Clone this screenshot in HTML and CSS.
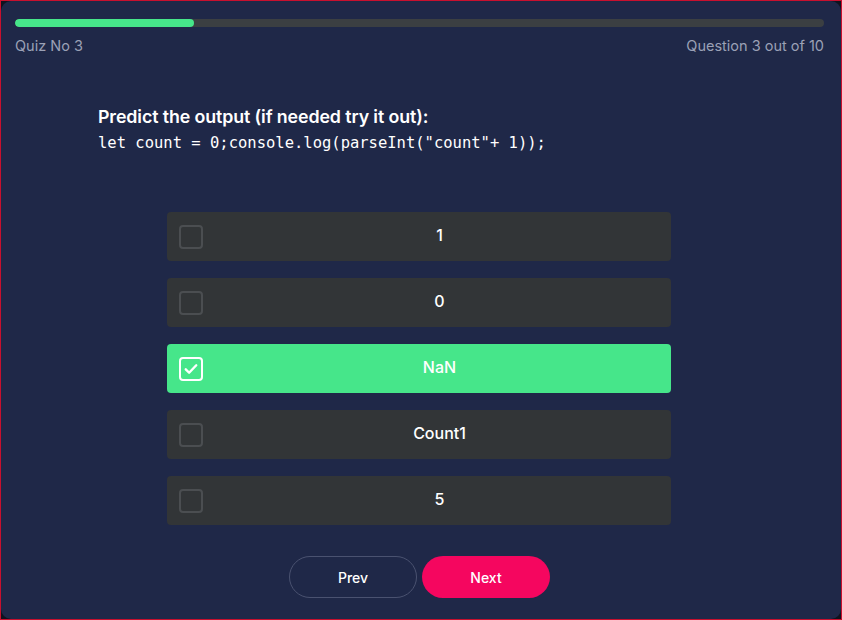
FILE: index.html
```html
<!DOCTYPE html>
<html>
<head>
<meta charset="utf-8">
<link rel="stylesheet" href="styles.css">
</head>
<body>
<div class="frame">
  <div class="panel">
    <div class="progress"><div class="progress-fill" style="width:22.1%"></div></div>
    <div class="meta">
      <span>Quiz No 3</span>
      <span>Question 3 out of 10</span>
    </div>
    <div class="question">
      <h2 class="q-title">Predict the output (if needed try it out):</h2>
      <code class="q-code">let count = 0;console.log(parseInt("count"+ 1));</code>
    </div>
    <div class="options">
      <div class="option"><span class="box"></span><span class="label">1</span></div>
      <div class="option"><span class="box"></span><span class="label">0</span></div>
      <div class="option selected"><span class="box"><svg viewBox="0 0 24 24" width="18" height="18"><path d="M5 12.5l4.5 4.5L19 7" fill="none" stroke="#fff" stroke-width="3.2" stroke-linecap="round" stroke-linejoin="round"/></svg></span><span class="label">NaN</span></div>
      <div class="option"><span class="box"></span><span class="label">Count1</span></div>
      <div class="option"><span class="box"></span><span class="label">5</span></div>
    </div>
    <div class="nav">
      <button class="btn btn-prev">Prev</button>
      <button class="btn btn-next">Next</button>
    </div>
  </div>
</div>
</body>
</html>
```
FILE: styles.css
```css
* { box-sizing: border-box; }
html, body { margin: 0; padding: 0; }
body {
  width: 842px;
  height: 620px;
  background: #0d0f1c;
  font-family: Inter, "Noto Sans", sans-serif;
}
.frame {
  width: 842px;
  height: 620px;
  border: 1px solid #c8102e;
  background: #10131f;
}
.panel {
  height: 100%;
  background: #1f2848;
  border-radius: 10px;
  padding: 18px 17px 0 14px;
  display: flex;
  flex-direction: column;
}
.progress {
  height: 8px;
  background: #3b3f42;
  border-radius: 4px;
  overflow: hidden;
}
.progress-fill {
  height: 100%;
  background: #46e68a;
  border-radius: 4px;
}
.meta {
  display: flex;
  justify-content: space-between;
  margin-top: 10px;
  font-size: 14.5px;
  color: #9ba1b6;
  letter-spacing: 0;
}
.question {
  margin: 52px 0 0 83px;
}
.q-title {
  margin: 0;
  font-size: 17.8px;
  font-weight: 600;
  color: #ffffff;
  letter-spacing: -0.1px;
}
.q-code {
  display: block;
  margin-top: 7px;
  font-family: "DejaVu Sans Mono", "Liberation Mono", monospace;
  font-size: 15.5px;
  color: #ffffff;
}
.options {
  margin: 60px auto 0;
  width: 504px;
  display: flex;
  flex-direction: column;
  gap: 17px;
  position: relative;
  left: -1px;
}
.option {
  height: 49px;
  background: #323537;
  border-radius: 4px;
  display: flex;
  align-items: center;
  padding-left: 12px;
}
.option.selected { background: #46e68a; }
.box {
  width: 24px;
  height: 24px;
  border: 2px solid #4b4e51;
  border-radius: 4px;
  display: flex;
  align-items: center;
  justify-content: center;
}
.selected .box { border-color: #ffffff; }
.label {
  flex: 1;
  text-align: center;
  color: #ffffff;
  font-size: 16px;
  font-weight: 500;
  margin-left: 6px;
  margin-top: -3px;
}
.nav {
  display: flex;
  justify-content: center;
  gap: 5px;
  margin-top: 31px;
}
.btn {
  width: 128px;
  height: 42px;
  border-radius: 21px;
  font-family: Inter, "Noto Sans", sans-serif;
  font-size: 14px;
  font-weight: 500;
  color: #ffffff;
  cursor: pointer;
}
.btn-prev {
  background: transparent;
  border: 1px solid #4a5270;
}
.btn-next {
  background: #f5065f;
  border: none;
}
```
